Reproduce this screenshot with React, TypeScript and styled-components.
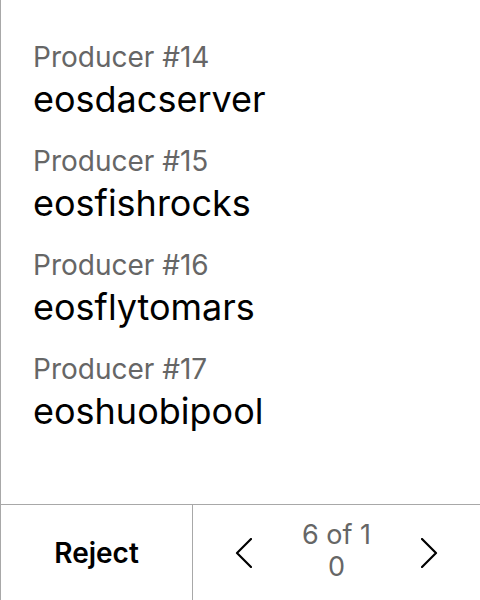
import React from "react"
import styled, { createGlobalStyle } from "styled-components"

const Global = createGlobalStyle`
    html, body {
        margin: 0;
        padding: 0;
        background: #fff;
    }
    body {
        font-family: Inter, "Noto Sans", sans-serif;
        color: #000;
    }
`

const Screen = styled.div`
    width: 480px;
    height: 600px;
    box-sizing: border-box;
    border-left: 1px solid #a8a8a8;
    display: flex;
    flex-direction: column;
`

const List = styled.div`
    flex: 1;
    padding: 40px 32px 0 32px;
    display: flex;
    flex-direction: column;
    gap: 20px;
`

const Producer = styled.div`
    display: flex;
    flex-direction: column;
`

const Rank = styled.div`
    font-size: 28px;
    line-height: 34px;
    color: #666;
`

const Name = styled.div`
    font-size: 36px;
    line-height: 50px;
    color: #000;
`

const Footer = styled.div`
    height: 95px;
    flex-shrink: 0;
    border-top: 1px solid #a8a8a8;
    display: flex;
`

const RejectButton = styled.button`
    width: 192px;
    border: none;
    border-right: 1px solid #a8a8a8;
    background: none;
    font-family: inherit;
    font-size: 28px;
    font-weight: 600;
    color: #000;
    padding: 0;
`

const Pager = styled.div`
    flex: 1;
    display: flex;
    align-items: center;
    justify-content: space-between;
    padding: 0 42px;
`

const Arrow = styled.button`
    border: none;
    background: none;
    padding: 0;
    width: 17px;
    height: 30px;
    display: flex;
`

const Counter = styled.div`
    width: 80px;
    margin-top: -4px;
    text-align: center;
    font-size: 27px;
    line-height: 32px;
    color: #666;
    word-break: break-all;
`

const producers = [
    { rank: 14, name: "eosdacserver" },
    { rank: 15, name: "eosfishrocks" },
    { rank: 16, name: "eosflytomars" },
    { rank: 17, name: "eoshuobipool" },
]

const Chevron = ({ left }: { left?: boolean }) => (
    <svg width="17" height="30" viewBox="0 0 17 30" fill="none">
        <path
            d={left ? "M16 1 L2 15 L16 29" : "M1 1 L15 15 L1 29"}
            stroke="#000"
            strokeWidth="2.2"
            strokeLinecap="round"
            strokeLinejoin="round"
        />
    </svg>
)

const App = () => (
    <>
        <Global />
        <Screen>
            <List>
                {producers.map(p => (
                    <Producer key={p.rank}>
                        <Rank>Producer #{p.rank}</Rank>
                        <Name>{p.name}</Name>
                    </Producer>
                ))}
            </List>
            <Footer>
                <RejectButton>Reject</RejectButton>
                <Pager>
                    <Arrow><Chevron left /></Arrow>
                    <Counter>6 of 10</Counter>
                    <Arrow><Chevron /></Arrow>
                </Pager>
            </Footer>
        </Screen>
    </>
)

export default App
